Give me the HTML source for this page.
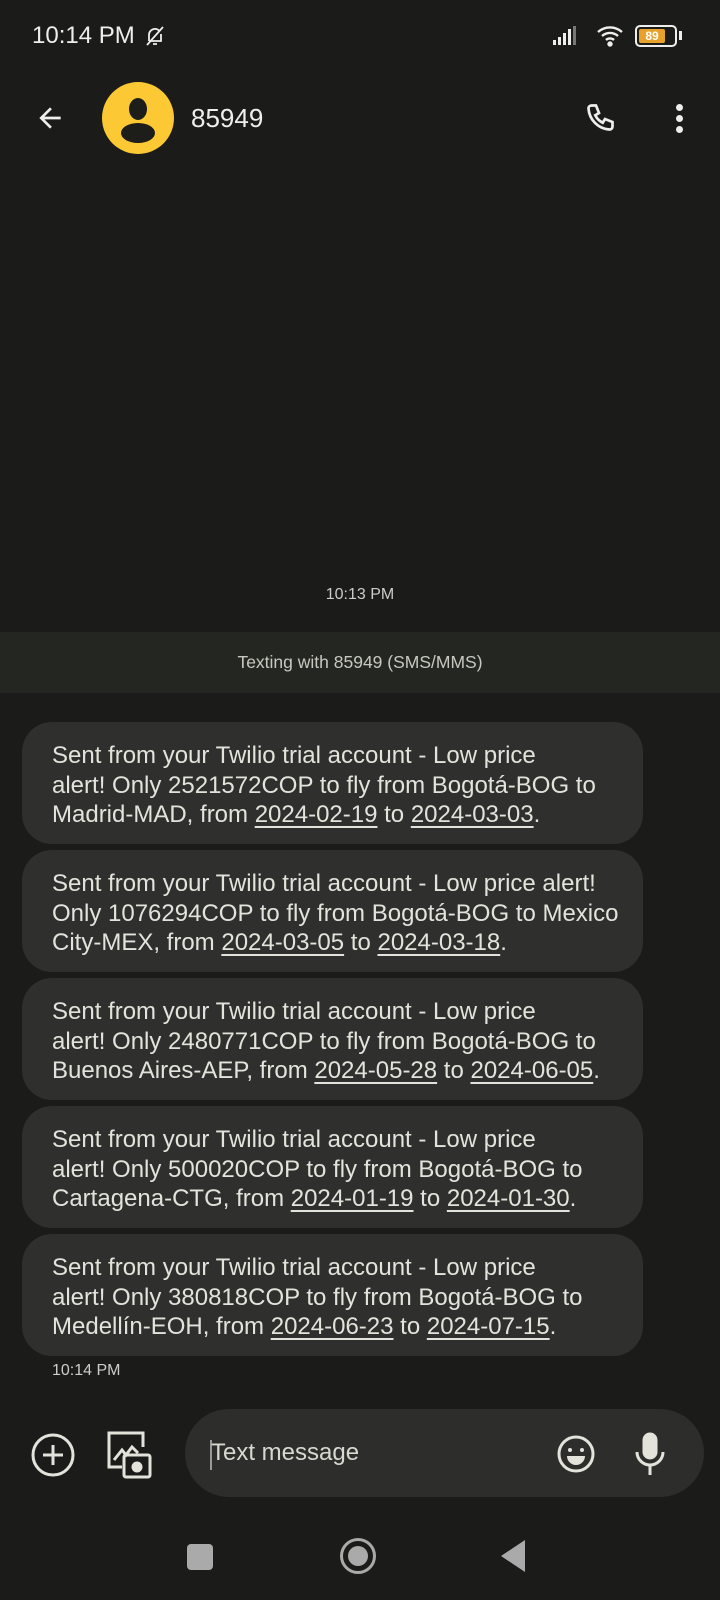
<!DOCTYPE html>
<html><head><meta charset="utf-8"><style>
*{margin:0;padding:0;box-sizing:border-box}
body{width:720px;height:1600px;background:#1b1c19;font-family:"Liberation Sans",sans-serif;color:#e3e3dc;position:relative;overflow:hidden}
.abs{position:absolute}
.b{position:absolute;left:22px;width:621px;height:122px;background:#2f302d;border-radius:30px;padding:19px 0 0 30px;font-size:24px;line-height:29.5px;white-space:nowrap;letter-spacing:0}
.b u{text-decoration:underline;text-underline-offset:4px;text-decoration-thickness:1.5px}
</style></head><body>
<div class="abs" style="left:32px;top:22px;font-size:24px;color:#eee">10:14 PM</div>
<svg class="abs" style="left:143px;top:24px" width="24" height="24" viewBox="0 0 24 24" fill="none" stroke="#eee" stroke-width="1.8"><path d="M6 17V11a6 6 0 0 1 10-4.5M18 10v7H6M10 20h4M4 21L20 3"/></svg>
<svg class="abs" style="left:552px;top:26px" width="32" height="20" viewBox="0 0 32 20" fill="#eee"><rect x="1" y="14" width="3" height="5"/><rect x="6" y="11" width="3" height="8"/><rect x="11" y="7" width="3" height="12"/><rect x="16" y="3" width="3" height="16"/><rect x="21" y="0" width="3" height="19" fill="#777"/></svg>
<svg class="abs" style="left:596px;top:24px" width="30" height="24" viewBox="0 0 30 24" fill="none" stroke="#eee" stroke-width="2.4"><path d="M2 8a18 18 0 0 1 24 0M6 12a12 12 0 0 1 16 0M10 16a6 6 0 0 1 8 0"/><circle cx="14" cy="20" r="1.5" fill="#eee"/></svg>
<div class="abs" style="left:635px;top:25px;width:42px;height:22px;border:2px solid #eee;border-radius:5px;padding:2px"><div style="width:26px;height:14px;background:#e8a22c;border-radius:2px;font-size:12px;color:#fff;text-align:center;line-height:14px;font-weight:bold">89</div></div>
<div class="abs" style="left:679px;top:31px;width:3px;height:9px;background:#eee"></div>
<svg class="abs" style="left:34px;top:102px" width="32" height="32" viewBox="0 0 24 24" fill="#eee"><path d="M20 11H7.8l5.6-5.6L12 4l-8 8 8 8 1.4-1.4L7.8 13H20z"/></svg>
<div class="abs" style="left:102px;top:82px;width:72px;height:72px;border-radius:50%;background:#fcc934;overflow:hidden">
<div class="abs" style="left:27px;top:16px;width:18px;height:22px;border-radius:50%;background:#1d1d1a"></div>
<div class="abs" style="left:19px;top:41px;width:34px;height:20px;border-radius:50%;background:#1d1d1a"></div></div>
<div class="abs" style="left:191px;top:103px;font-size:26px;color:#eee">85949</div>
<svg class="abs" style="left:584px;top:101px" width="36" height="36" viewBox="0 0 24 24" fill="none" stroke="#eee" stroke-width="1.8"><path d="M5 3h3l2 5-2.5 1.5a11 11 0 0 0 5 5L14 12l5 2v3a2 2 0 0 1-2 2A15 15 0 0 1 3 5a2 2 0 0 1 2-2z"/></svg>
<div class="abs" style="left:676px;top:104px;width:7px;height:7px;border-radius:50%;background:#eee"></div>
<div class="abs" style="left:676px;top:115px;width:7px;height:7px;border-radius:50%;background:#eee"></div>
<div class="abs" style="left:676px;top:126px;width:7px;height:7px;border-radius:50%;background:#eee"></div>
<div class="abs" style="left:0;top:586px;width:720px;text-align:center;font-size:16px;color:#ccc">10:13 PM</div>
<div class="abs" style="left:0;top:632px;width:720px;height:61px;background:#242621;text-align:center;line-height:61px;font-size:17.5px;color:#c8c8c0">Texting with 85949 (SMS/MMS)</div>
<div class="b" style="top:722px">Sent from your Twilio trial account - Low price<br>alert! Only 2521572COP to fly from Bogotá-BOG to<br>Madrid-MAD, from <u>2024-02-19</u> to <u>2024-03-03</u>.</div>
<div class="b" style="top:850px">Sent from your Twilio trial account - Low price alert!<br>Only 1076294COP to fly from Bogotá-BOG to Mexico<br>City-MEX, from <u>2024-03-05</u> to <u>2024-03-18</u>.</div>
<div class="b" style="top:978px">Sent from your Twilio trial account - Low price<br>alert! Only 2480771COP to fly from Bogotá-BOG to<br>Buenos Aires-AEP, from <u>2024-05-28</u> to <u>2024-06-05</u>.</div>
<div class="b" style="top:1106px">Sent from your Twilio trial account - Low price<br>alert! Only 500020COP to fly from Bogotá-BOG to<br>Cartagena-CTG, from <u>2024-01-19</u> to <u>2024-01-30</u>.</div>
<div class="b" style="top:1234px">Sent from your Twilio trial account - Low price<br>alert! Only 380818COP to fly from Bogotá-BOG to<br>Medellín-EOH, from <u>2024-06-23</u> to <u>2024-07-15</u>.</div>
<div class="abs" style="left:52px;top:1362px;font-size:16px;color:#ccc">10:14 PM</div>
<svg class="abs" style="left:30px;top:1432px" width="46" height="46" viewBox="0 0 46 46" fill="none" stroke="#e3e3dc" stroke-width="3"><circle cx="23" cy="23" r="20"/><path d="M23 13v20M13 23h20"/></svg>
<svg class="abs" style="left:106px;top:1430px" width="48" height="50" viewBox="0 0 48 50" fill="none" stroke="#e3e3dc" stroke-width="3"><path d="M16 37H3V3h34v14"/><path d="M8 30l8-10 4 5 6-8 6 6" /><rect x="18" y="25" width="26" height="22" rx="2"/><circle cx="31" cy="37" r="4" fill="#e3e3dc"/></svg>
<div class="abs" style="left:185px;top:1409px;width:519px;height:88px;border-radius:44px;background:#2d2e2b"></div>
<div class="abs" style="left:210px;top:1440px;width:2px;height:30px;background:#999"></div>
<div class="abs" style="left:211px;top:1439px;font-size:24px;color:#d8d8d0">Text message</div>
<svg class="abs" style="left:556px;top:1434px" width="40" height="40" viewBox="0 0 40 40" fill="none" stroke="#e3e3dc" stroke-width="3"><circle cx="20" cy="20" r="17"/><circle cx="14" cy="16" r="2" fill="#e3e3dc" stroke="none"/><circle cx="26" cy="16" r="2" fill="#e3e3dc" stroke="none"/><path d="M11 22h18a9 9 0 0 1-18 0z" fill="#e3e3dc" stroke="none"/></svg>
<svg class="abs" style="left:634px;top:1432px" width="32" height="44" viewBox="0 0 32 44" fill="none" stroke="#e3e3dc" stroke-width="3"><rect x="10" y="2" width="12" height="24" rx="6" fill="#e3e3dc"/><path d="M3 20a13 13 0 0 0 26 0M16 33v10"/></svg>
<div class="abs" style="left:187px;top:1544px;width:26px;height:26px;border-radius:4px;background:#aaa"></div>
<div class="abs" style="left:340px;top:1538px;width:36px;height:36px;border-radius:50%;border:3px solid #aaa"></div>
<div class="abs" style="left:348px;top:1546px;width:20px;height:20px;border-radius:50%;background:#aaa"></div>
<svg class="abs" style="left:500px;top:1539px" width="26" height="34" viewBox="0 0 26 34"><path d="M25 1L1 17l24 16z" fill="#aaa"/></svg>
</body></html>
